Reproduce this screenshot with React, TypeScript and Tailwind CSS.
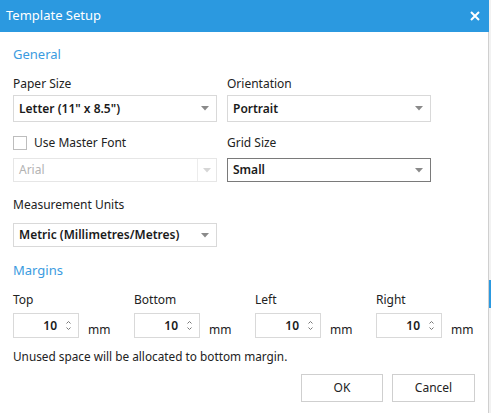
import React from "react";

const font = { fontFamily: '"Segoe UI", "Noto Sans", sans-serif' };

function Arrow({ disabled }: { disabled?: boolean }) {
  return (
    <svg width="8" height="5" viewBox="0 0 8 5" className="shrink-0">
      <path d="M0 0 L8 0 L4 4.5 Z" fill={disabled ? "#d6d6d6" : "#8a8a8a"} />
    </svg>
  );
}

function Select({
  value,
  h = "h-[27px]",
  border = "border-[#d9d9d9]",
}: {
  value: string;
  h?: string;
  border?: string;
}) {
  return (
    <div className={`flex items-center w-[204px] ${h} border ${border} bg-white pl-[5px] pr-[7px]`}>
      <span className="flex-1 text-[12px] font-semibold text-[#1a1a1a] leading-none">{value}</span>
      <Arrow />
    </div>
  );
}

function Spin({ label, last }: { label: string; last?: boolean }) {
  return (
    <div className={`flex flex-col shrink-0 ${last ? "w-auto" : "w-[121px]"}`}>
      <div className="h-[16px] leading-[16px] text-[12px] text-[#222]">{label}</div>
      <div className="flex items-end mt-[5px]">
        <div className="flex items-center w-[66px] h-[25px] border border-[#d9d9d9] bg-white">
          <span className="flex-1 text-right text-[12px] font-semibold text-[#1a1a1a] pr-[6px]">10</span>
          <div className="flex flex-col items-center justify-center gap-[3px] w-[10px] mr-[5px]">
            <svg width="5" height="3" viewBox="0 0 5 3">
              <path d="M0.5 2.5 L2.5 0.5 L4.5 2.5" stroke="#777" strokeWidth="1" fill="none" />
            </svg>
            <svg width="5" height="3" viewBox="0 0 5 3">
              <path d="M0.5 0.5 L2.5 2.5 L4.5 0.5" stroke="#777" strokeWidth="1" fill="none" />
            </svg>
          </div>
        </div>
        <span className="ml-[9px] text-[12px] text-[#222] leading-[16px]">mm</span>
      </div>
    </div>
  );
}

export default function App() {
  return (
    <div className="flex w-[491px] h-[413px] bg-white overflow-hidden" style={font}>
      <div className="flex flex-col w-[489px] h-full">
        <div className="flex items-center h-[32px] bg-[#2b99e0] pl-[6px] pr-[9px] shrink-0">
          <span className="flex-1 text-white text-[13px]">Template Setup</span>
          <svg width="10" height="10" viewBox="0 0 10 10">
            <path d="M1 1 L9 9 M9 1 L1 9" stroke="white" strokeWidth="2" />
          </svg>
        </div>
        <div className="flex-1 flex flex-col px-[13px] border-r border-[#cfcfcf]">
          <div className="mt-[14px] h-[16px] leading-[16px] text-[13px] text-[#3a9be0]">General</div>

          <div className="grid grid-cols-[204px_204px] gap-x-[10px] mt-[14px]">
            <div className="h-[16px] leading-[16px] text-[12px] text-[#222]">Paper Size</div>
            <div className="h-[16px] leading-[16px] text-[12px] text-[#222]">Orientation</div>
            <div className="mt-[3px]">
              <Select value={'Letter (11" x 8.5")'} />
            </div>
            <div className="mt-[3px]">
              <Select value="Portrait" />
            </div>
          </div>

          <div className="grid grid-cols-[204px_204px] gap-x-[10px] mt-[12px]">
            <div className="flex items-center h-[18px]">
              <div className="w-[14px] h-[14px] border border-[#bdbdbd] bg-white" />
              <span className="ml-[7px] text-[12px] text-[#222]">Use Master Font</span>
            </div>
            <div className="flex items-center h-[18px] text-[12px] text-[#222]">Grid Size</div>
            <div className="mt-[6px]">
              <div className="flex items-center w-[204px] h-[24px] border border-[#e6e6e6] bg-white pl-[5px]">
                <span className="flex-1 text-[12px] text-[#b3b3b3]">Arial</span>
                <div className="w-px h-full bg-[#ececec]" />
                <div className="w-[18px] flex justify-center">
                  <Arrow disabled />
                </div>
              </div>
            </div>
            <div className="mt-[6px]">
              <Select value="Small" h="h-[24px]" border="border-[#7a7a7a]" />
            </div>
          </div>

          <div className="mt-[15px] h-[16px] leading-[16px] text-[12px] text-[#222]">Measurement Units</div>
          <div className="mt-[10px]">
            <Select value="Metric (Millimetres/Metres)" h="h-[24px]" />
          </div>

          <div className="mt-[15px] h-[16px] leading-[16px] text-[13px] text-[#3a9be0]">Margins</div>

          <div className="flex mt-[14px]">
            <Spin label="Top" />
            <Spin label="Bottom" />
            <Spin label="Left" />
            <Spin label="Right" last />
          </div>

          <div className="mt-[10px] h-[16px] leading-[16px] text-[11.8px] text-[#222]">
            Unused space will be allocated to bottom margin.
          </div>

          <div className="flex justify-end gap-[9px] mt-[10px]">
            <button className="w-[82px] h-[28px] border border-[#cfcfcf] bg-white text-[12px] text-[#222]">OK</button>
            <button className="w-[83px] h-[28px] border border-[#cfcfcf] bg-white text-[12px] text-[#222]">Cancel</button>
          </div>
        </div>
      </div>
      <div className="w-[2px] h-full bg-[#f2f2f2] flex flex-col">
        <div className="h-[280px]" />
        <div className="h-[28px] bg-[#2b99e0]" />
      </div>
    </div>
  );
}
